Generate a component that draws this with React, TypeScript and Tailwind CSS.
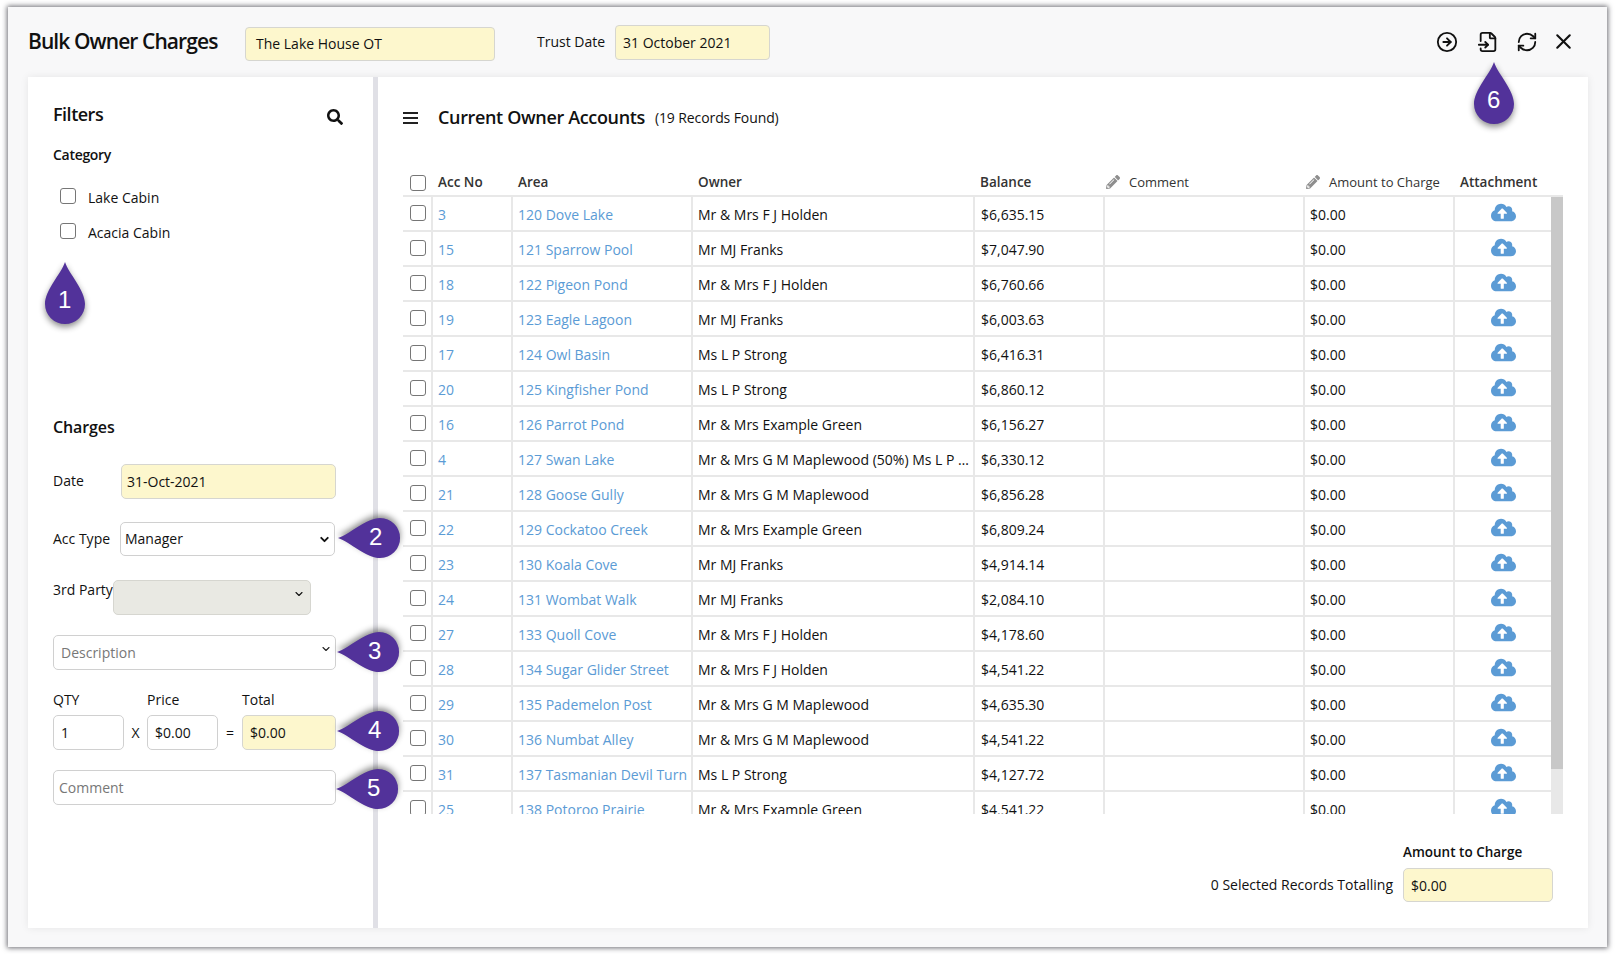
import React from 'react';
import { CircleArrowRight, FileInput, RefreshCw, X, ChevronDown } from 'lucide-react';
import { FaCloudUploadAlt, FaPencilAlt, FaSearch } from 'react-icons/fa';

type Row = { acc: string; area: string; owner: string; balance: string };

const rows: Row[] = [
  { acc: '3', area: '120 Dove Lake', owner: 'Mr & Mrs F J Holden', balance: '$6,635.15' },
  { acc: '15', area: '121 Sparrow Pool', owner: 'Mr MJ Franks', balance: '$7,047.90' },
  { acc: '18', area: '122 Pigeon Pond', owner: 'Mr & Mrs F J Holden', balance: '$6,760.66' },
  { acc: '19', area: '123 Eagle Lagoon', owner: 'Mr MJ Franks', balance: '$6,003.63' },
  { acc: '17', area: '124 Owl Basin', owner: 'Ms L P Strong', balance: '$6,416.31' },
  { acc: '20', area: '125 Kingfisher Pond', owner: 'Ms L P Strong', balance: '$6,860.12' },
  { acc: '16', area: '126 Parrot Pond', owner: 'Mr & Mrs Example Green', balance: '$6,156.27' },
  { acc: '4', area: '127 Swan Lake', owner: 'Mr & Mrs G M Maplewood (50%) Ms L P Strong (50%)', balance: '$6,330.12' },
  { acc: '21', area: '128 Goose Gully', owner: 'Mr & Mrs G M Maplewood', balance: '$6,856.28' },
  { acc: '22', area: '129 Cockatoo Creek', owner: 'Mr & Mrs Example Green', balance: '$6,809.24' },
  { acc: '23', area: '130 Koala Cove', owner: 'Mr MJ Franks', balance: '$4,914.14' },
  { acc: '24', area: '131 Wombat Walk', owner: 'Mr MJ Franks', balance: '$2,084.10' },
  { acc: '27', area: '133 Quoll Cove', owner: 'Mr & Mrs F J Holden', balance: '$4,178.60' },
  { acc: '28', area: '134 Sugar Glider Street', owner: 'Mr & Mrs F J Holden', balance: '$4,541.22' },
  { acc: '29', area: '135 Pademelon Post', owner: 'Mr & Mrs G M Maplewood', balance: '$4,635.30' },
  { acc: '30', area: '136 Numbat Alley', owner: 'Mr & Mrs G M Maplewood', balance: '$4,541.22' },
  { acc: '31', area: '137 Tasmanian Devil Turn', owner: 'Ms L P Strong', balance: '$4,127.72' },
  { acc: '25', area: '138 Potoroo Prairie', owner: 'Mr & Mrs Example Green', balance: '$4,541.22' },
];

const Check = () => (
  <input type="checkbox" className="block appearance-none w-4 h-4 bg-white border border-[#767676] rounded-[3px]" />
);

// purple drop marker, the tip sits at the given side
const Drop = ({ n, side, className }: { n: number; side: 'up' | 'left'; className: string }) => (
  <div className={`absolute z-10 ${className} ${side === 'up' ? 'w-[40px] h-[62px]' : 'w-[62px] h-[40px]'}`}>
    <svg
      viewBox="0 0 40 62"
      className={`absolute overflow-visible w-[40px] h-[62px] ${side === 'left' ? 'left-[11px] top-[-11px] -rotate-90 drop-shadow-[3px_0_3px_rgba(0,0,0,0.45)]' : 'left-0 top-0 drop-shadow-[0_3px_3px_rgba(0,0,0,0.45)]'}`}
    >
      <path d="M20 0 C24 12 40 28 40 42 A20 20 0 0 1 0 42 C0 28 16 12 20 0 Z" fill="#52329a" />
    </svg>
    <span
      className={`absolute text-white text-[24px] leading-[28px] font-['Liberation_Sans',sans-serif] ${side === 'up' ? 'left-[13px] top-[24px]' : 'left-[31px] top-[5px]'}`}
    >
      {n}
    </span>
  </div>
);

export default function App() {
  return (
    <div className="w-[1615px] h-[954px] bg-white pt-[7px] pl-[8px] overflow-hidden font-['Open_Sans',sans-serif] text-[14px] text-[#111]">
      <div className="relative w-[1599px] h-[940px] bg-[#f8f8f9] shadow-[0_0_5px_1px_rgba(30,30,40,0.65)] flex flex-col">
        {/* header */}
        <div className="h-[70px] shrink-0 flex pl-[20px]">
          <h1 className="w-[217px] text-[21px] font-semibold leading-[69px] tracking-[-0.92px] text-[#111]">Bulk Owner Charges</h1>
          <div className="mt-[20px] w-[250px] h-[34px] flex items-center pl-[10px] pb-[1px] bg-[#fdf7cd] border border-[#d6d6d0] rounded-[4px]">The Lake House OT</div>
          <span className="ml-[42px] w-[78px] leading-[70px]">Trust Date</span>
          <div className="mt-[18px] w-[155px] h-[35px] flex items-center pl-[7px] bg-[#fdf7cd] border border-[#d6d6d0] rounded-[4px]">31 October 2021</div>
          <div className="ml-auto flex items-start pt-[24px] pr-[31px] text-[#111]">
            <CircleArrowRight size={22} strokeWidth={2} className="mr-[19px]" />
            <FileInput size={22} strokeWidth={2} className="mr-[17px]" />
            <RefreshCw size={22} strokeWidth={2} className="mr-[13px]" />
            <X size={25} strokeWidth={2} className="-mt-[2px]" />
          </div>
        </div>

        {/* panels */}
        <div className="flex ml-[20px] w-[1560px] h-[851px] shadow-[0_0_8px_rgba(0,0,0,0.08)] bg-[#e0e0e6]">
          {/* left */}
          <div className="relative z-10 w-[345px] bg-white pl-[25px] shrink-0">
            <div className="flex justify-between items-center mt-[24px] h-[26px] pr-[30px]">
              <h2 className="text-[18px] font-semibold tracking-[-0.5px]">Filters</h2>
              <FaSearch size={16} className="mt-[6px] text-[#111]" />
            </div>
            <div className="mt-[18px] font-semibold leading-[20px] text-[14px] tracking-[-0.3px]">Category</div>
            <label className="mt-[22px] flex items-center h-[20px] pl-[7px] gap-[12px]"><span className="-mt-[2px]"><Check /></span>Lake Cabin</label>
            <label className="mt-[15px] flex items-center h-[20px] pl-[7px] gap-[12px]"><span className="-mt-[2px]"><Check /></span>Acacia Cabin</label>

            <h2 className="mt-[173px] text-[16px] font-semibold leading-[24px] tracking-[-0.1px]">Charges</h2>
            <div className="mt-[25px] flex items-center h-[35px]">
              <span className="w-[68px] pb-[2px]">Date</span>
              <div className="w-[215px] h-[35px] flex items-center pl-[5px] bg-[#fdf7cd] border border-[#d6d6d0] rounded-[5px]">31-Oct-2021</div>
            </div>
            <div className="mt-[23px] flex items-center h-[34px]">
              <span className="w-[67px] pb-[2px]">Acc Type</span>
              <div className="relative w-[215px] h-[34px] flex items-center pl-[4px] pb-[2px] bg-white border border-[#d0d0d0] rounded-[5px]">
                Manager
                <ChevronDown size={13} strokeWidth={3.5} className="absolute right-[3px] top-[10px]" />
              </div>
            </div>
            <div className="mt-[24px] flex items-start h-[35px]">
              <span className="w-[60px] leading-[20px]">3rd Party</span>
              <div className="relative w-[198px] h-[35px] bg-[#e9e9e3] border border-[#d6d6d0] rounded-[5px]">
                <ChevronDown size={12} strokeWidth={2.2} className="absolute right-[5px] top-[7px]" />
              </div>
            </div>
            <div className="relative mt-[20px] w-[283px] h-[35px] flex items-center pl-[7px] text-[#777] bg-white border border-[#d0d0d0] rounded-[5px]">
              Description
              <ChevronDown size={12} strokeWidth={2.2} className="absolute right-[3px] top-[7px] text-[#222]" />
            </div>
            <div className="mt-[20px] flex leading-[20px]">
              <span className="w-[94px]">QTY</span>
              <span className="w-[95px]">Price</span>
              <span>Total</span>
            </div>
            <div className="mt-[5px] flex items-center h-[35px]">
              <div className="w-[71px] h-[35px] flex items-center pl-[7px] bg-white border border-[#d0d0d0] rounded-[5px]">1</div>
              <span className="w-[23px] text-center">X</span>
              <div className="w-[71px] h-[35px] flex items-center pl-[7px] bg-white border border-[#d0d0d0] rounded-[5px]">$0.00</div>
              <span className="w-[24px] text-center">=</span>
              <div className="w-[94px] h-[35px] flex items-center pl-[7px] bg-[#fdf7cd] border border-[#d6d6d0] rounded-[5px]">$0.00</div>
            </div>
            <div className="mt-[20px] w-[283px] h-[35px] flex items-center pl-[5px] text-[#777] bg-white border border-[#d0d0d0] rounded-[5px]">Comment</div>

            <Drop n={1} side="up" className="left-[17px] top-[185px]" />
            <Drop n={2} side="left" className="left-[310px] top-[441px]" />
            <Drop n={3} side="left" className="left-[309px] top-[555px]" />
            <Drop n={4} side="left" className="left-[309px] top-[634px]" />
            <Drop n={5} side="left" className="left-[308px] top-[692px]" />
          </div>

          {/* right */}
          <div className="relative ml-[5px] flex-1 bg-white flex flex-col pl-[25px]">
            <div className="flex items-center mt-[26px] h-[30px]">
              <svg width="16" height="14" viewBox="0 0 16 14" className="text-[#222]">
                <path d="M0 2h15M0 7h15M0 12h15" stroke="currentColor" strokeWidth="2" />
              </svg>
              <h2 className="ml-[19px] -mt-[1px] text-[18px] font-semibold tracking-[-0.35px]">Current Owner Accounts</h2>
              <span className="ml-[10px] -mt-[1px] text-[14px] tracking-[-0.1px]">(19 Records Found)</span>
            </div>
            <div className="mt-[29px] flex w-[1160px] h-[35px] text-[#333] font-semibold text-[13.5px] border-b-2 border-[#e8e8e8] leading-[40px]">
              <div className="w-[30px] pt-[13px] pl-[7px]"><Check /></div>
              <div className="w-[80px] pl-[5px]">Acc No</div>
              <div className="w-[180px] pl-[5px]">Area</div>
              <div className="w-[282px] pl-[5px]">Owner</div>
              <div className="w-[130px] pl-[5px]">Balance</div>
              <div className="w-[200px] flex items-start pl-[1px]">
                <FaPencilAlt size={14} className="text-[#8e8e8e] mt-[13px]" />
                <span className="ml-[9px] font-medium text-[13px]">Comment</span>
              </div>
              <div className="w-[150px] flex items-start pl-[1px]">
                <FaPencilAlt size={14} className="text-[#8e8e8e] mt-[13px]" />
                <span className="ml-[9px] font-medium text-[13px]">Amount to Charge</span>
              </div>
              <div className="w-[96px] pl-[5px] whitespace-nowrap">Attachment</div>
            </div>
            <div className="flex h-[617px] overflow-hidden">
              <div className="w-[1148px] shrink-0">
                {rows.map((r) => (
                  <div key={r.acc} className="flex h-[35px] border-b-2 border-[#e8e8e8] leading-[35px]">
                    <div className="w-[30px] pt-[8px] pl-[7px] border-r-2 border-[#e8e8e8] shrink-0"><Check /></div>
                    <div className="w-[80px] pl-[5px] text-[#5b9bd5] border-r-2 border-[#e8e8e8] shrink-0">{r.acc}</div>
                    <div className="w-[180px] pl-[5px] text-[#5b9bd5] border-r-2 border-[#e8e8e8] shrink-0 whitespace-nowrap">{r.area}</div>
                    <div className="w-[282px] pl-[5px] pr-[3px] border-r-2 border-[#e8e8e8] shrink-0 truncate">{r.owner}</div>
                    <div className="w-[130px] pl-[6px] border-r-2 border-[#e8e8e8] shrink-0">{r.balance}</div>
                    <div className="w-[200px] border-r-2 border-[#e8e8e8] shrink-0" />
                    <div className="w-[150px] pl-[5px] border-r-2 border-[#e8e8e8] shrink-0">$0.00</div>
                    <div className="flex-1 flex justify-center pt-[3px] text-[#5b9bd5]"><FaCloudUploadAlt size={25} /></div>
                  </div>
                ))}
              </div>
              <div className="w-[12px] bg-[#e8e8e8]">
                <div className="h-[572px] bg-[#c8c8c8]" />
              </div>
            </div>
            <div className="flex flex-col items-end w-[1150px] pt-[28px]">
              <div className="w-[150px] font-semibold text-[13.5px] leading-[20px]">Amount to Charge</div>
              <div className="mt-[6px] flex items-center">
                <span className="mr-[10px] pb-[1px]">0 Selected Records Totalling</span>
                <div className="w-[150px] h-[34px] flex items-center pl-[7px] bg-[#fdf7cd] border border-[#d6d6d0] rounded-[5px]">$0.00</div>
              </div>
            </div>
            <Drop n={6} side="up" className="left-[1096px] top-[-15px]" />
          </div>
        </div>
      </div>
    </div>
  );
}
